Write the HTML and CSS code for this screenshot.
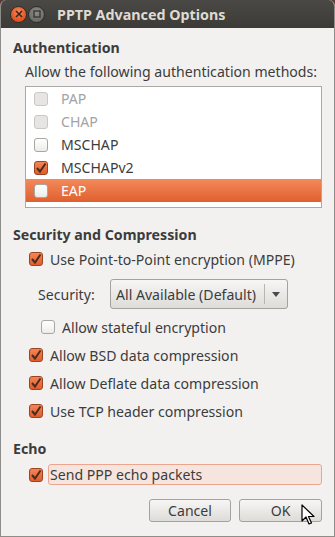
FILE: index.html
```html
<!DOCTYPE html>
<html lang="en">
<head>
    <meta charset="UTF-8">
    <title>PPTP Advanced Options</title>
    <link rel="stylesheet" href="styles.css">
</head>
<body>
    <div class="window">
        <div class="titlebar">
            <span class="wbtn close">
                <svg width="8" height="8" viewBox="0 0 8 8"><path d="M1 1 L7 7 M7 1 L1 7" stroke="#3b2418" stroke-width="1.6"/></svg>
            </span>
            <span class="wbtn minim">
                <svg width="8" height="8" viewBox="0 0 8 8"><rect x="1" y="1" width="6" height="6" fill="none" stroke="#3a3936" stroke-width="1.4"/></svg>
            </span>
            <span class="title">PPTP Advanced Options</span>
        </div>

        <div class="content">
            <div class="section-title">Authentication</div>
            <div class="hint">Allow the following authentication methods:</div>

            <div class="list">
                <div class="list-row disabled"><span class="check"></span>PAP</div>
                <div class="list-row disabled"><span class="check"></span>CHAP</div>
                <div class="list-row"><span class="check"></span>MSCHAP</div>
                <div class="list-row"><span class="check on"><svg width="12" height="12" viewBox="0 0 12 12"><path d="M2 6 L5 9.5 L10.5 1.5" fill="none" stroke="#4d2a1c" stroke-width="2"/></svg></span>MSCHAPv2</div>
                <div class="list-row selected"><span class="check"></span>EAP</div>
            </div>

            <div class="section-title sec2">Security and Compression</div>
            <div class="opt first"><span class="check on"><svg width="12" height="12" viewBox="0 0 12 12"><path d="M2 6 L5 9.5 L10.5 1.5" fill="none" stroke="#4d2a1c" stroke-width="2"/></svg></span>Use Point-to-Point encryption (MPPE)</div>

            <div class="security-row">
                <span class="sec-label">Security:</span>
                <div class="combo">
                    <span class="combo-text">All Available (Default)</span>
                    <span class="combo-sep"></span>
                    <span class="combo-arrow"></span>
                </div>
            </div>

            <div class="opt sub"><span class="check"></span>Allow stateful encryption</div>
            <div class="opt"><span class="check on"><svg width="12" height="12" viewBox="0 0 12 12"><path d="M2 6 L5 9.5 L10.5 1.5" fill="none" stroke="#4d2a1c" stroke-width="2"/></svg></span>Allow BSD data compression</div>
            <div class="opt"><span class="check on"><svg width="12" height="12" viewBox="0 0 12 12"><path d="M2 6 L5 9.5 L10.5 1.5" fill="none" stroke="#4d2a1c" stroke-width="2"/></svg></span>Allow Deflate data compression</div>
            <div class="opt"><span class="check on"><svg width="12" height="12" viewBox="0 0 12 12"><path d="M2 6 L5 9.5 L10.5 1.5" fill="none" stroke="#4d2a1c" stroke-width="2"/></svg></span>Use TCP header compression</div>

            <div class="section-title sec3">Echo</div>
            <div class="echo-row">
                <span class="check on"><svg width="12" height="12" viewBox="0 0 12 12"><path d="M2 6 L5 9.5 L10.5 1.5" fill="none" stroke="#4d2a1c" stroke-width="2"/></svg></span>
                <span class="focus-label">Send PPP echo packets</span>
            </div>

            <div class="buttons">
                <button class="btn">Cancel</button>
                <button class="btn ok">OK</button>
                <svg class="cursor" width="14" height="22" viewBox="0 0 14 22">
                    <path d="M1 1 L1 17 L5 13 L8 20 L10.5 19 L7.5 12.5 L13 12.5 Z" fill="#fff" stroke="#000" stroke-width="1.2" stroke-linejoin="round"/>
                </svg>
            </div>
        </div>
    </div>
</body>
</html>
```

FILE: styles.css
```css
body {
    margin: 0;
    padding: 0;
    background-color: #5a3a34;
    font-family: 'Noto Sans', 'DejaVu Sans', sans-serif;
    font-size: 14.1px;
    color: #3c3c3c;
}

.window {
    width: 335px;
    height: 537px;
    box-sizing: border-box;
    background-color: #f2f1f0;
    border-radius: 6px 6px 0 0;
    border: 1px solid #8f8d8a;
    border-top: none;
    overflow: hidden;
}

.titlebar {
    height: 28px;
    background: linear-gradient(#4a4945, #3c3b37);
    display: flex;
    align-items: center;
    padding-left: 10px;
    margin: 0 -1px;
}

.wbtn {
    width: 17px;
    height: 17px;
    border-radius: 50%;
    box-sizing: border-box;
    display: flex;
    align-items: center;
    justify-content: center;
}

.close {
    background: radial-gradient(circle at 50% 35%, #f58a5c, #e0511f 70%);
    border: 1px solid #2e2c29;
}

.minim {
    margin-left: 1px;
    background: radial-gradient(circle at 50% 35%, #8e8d89, #6d6c68 70%);
    border: 1px solid #2e2c29;
}

.title {
    margin-left: 12px;
    color: #dfdbd2;
    font-weight: bold;
    font-size: 14.3px;
}

.content {
    padding: 0 12px 0 12px;
}

.section-title {
    font-weight: bold;
    font-size: 14.2px;
    height: 20px;
    line-height: 20px;
    margin-top: 10px;
}

.sec2 {
    margin-top: 17px;
}

.sec3 {
    margin-top: 18px;
}

.hint {
    height: 20px;
    line-height: 20px;
    margin-top: 4px;
    padding-left: 12px;
    white-space: nowrap;
}

.list {
    margin: 4px 0 0 12px;
    height: 122px;
    box-sizing: border-box;
    border: 1px solid #aaa9a7;
    background-color: #fff;
}

.list-row {
    height: 23px;
    display: flex;
    align-items: center;
    padding-left: 8px;
}

.list-row .check {
    margin-right: 13px;
}

.list-row.disabled {
    color: #a3a3a3;
}

.list-row.disabled .check {
    background: #e6e5e4;
    border-color: #c9c8c6;
}

.list-row.selected {
    background: linear-gradient(#f3895a, #e0602f);
    color: #fff;
}

.check {
    width: 14px;
    height: 14px;
    box-sizing: border-box;
    border: 1px solid #a9a7a4;
    border-radius: 3px;
    background: linear-gradient(#ffffff, #edecea);
    display: inline-flex;
    align-items: center;
    justify-content: center;
    flex-shrink: 0;
}

.check.on {
    background: linear-gradient(#f38559, #e05d2a);
    border-color: #9c4420;
}

.opt {
    height: 20px;
    display: flex;
    align-items: center;
    margin-top: 8px;
    padding-left: 16px;
    white-space: nowrap;
}

.opt .check {
    margin-right: 7px;
}

.opt.first {
    margin-top: 4px;
}

.opt.sub {
    padding-left: 28px;
}

.security-row {
    display: flex;
    align-items: center;
    margin-top: 10px;
    padding-left: 25px;
    height: 30px;
}

.sec-label {
    width: 72px;
}

.combo {
    width: 178px;
    height: 30px;
    box-sizing: border-box;
    border: 1px solid #a5a29d;
    border-radius: 3px;
    background: linear-gradient(#f7f6f5, #dedcd8);
    display: flex;
    align-items: center;
    padding-left: 5px;
}

.combo-text {
    flex: 1;
    white-space: nowrap;
}

.combo-sep {
    width: 1px;
    height: 20px;
    background-color: #b9b6b1;
    margin-right: 7px;
}

.combo-arrow {
    width: 0;
    height: 0;
    border-left: 4px solid transparent;
    border-right: 4px solid transparent;
    border-top: 5px solid #4a4a4a;
    margin-right: 7px;
}

.echo-row {
    display: flex;
    align-items: center;
    margin-top: 5px;
    padding-left: 16px;
    height: 21px;
}

.echo-row .check {
    margin-right: 5px;
}

.focus-label {
    flex: 1;
    height: 21px;
    line-height: 19px;
    box-sizing: border-box;
    border: 1px solid #eca58e;
    border-radius: 3px;
    background-color: #f6e5df;
    padding-left: 1px;
}

.buttons {
    position: relative;
    display: flex;
    justify-content: flex-end;
    gap: 8px;
    margin-top: 14px;
}

.btn {
    width: 82px;
    height: 23px;
    border: 1px solid #a5a29d;
    border-radius: 3px;
    background: linear-gradient(#f7f6f5, #dedcd8);
    font-family: inherit;
    font-size: 14.1px;
    color: #3c3c3c;
    padding: 0;
}

.ok {
    width: 83px;
}

.cursor {
    position: absolute;
    right: 7px;
    top: 5px;
}
```
